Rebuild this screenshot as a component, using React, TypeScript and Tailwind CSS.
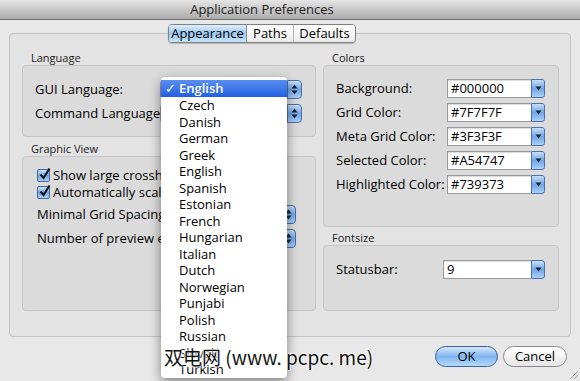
import React from "react";

const font = "font-['Open_Sans','DejaVu_Sans',sans-serif]";

const languages = [
  "Czech",
  "Danish",
  "German",
  "Greek",
  "English",
  "Spanish",
  "Estonian",
  "French",
  "Hungarian",
  "Italian",
  "Dutch",
  "Norwegian",
  "Punjabi",
  "Polish",
  "Russian",
  "Slovak",
  "Turkish",
];

const colors = [
  { label: "Background:", value: "#000000" },
  { label: "Grid Color:", value: "#7F7F7F" },
  { label: "Meta Grid Color:", value: "#3F3F3F" },
  { label: "Selected Color:", value: "#A54747" },
  { label: "Highlighted Color:", value: "#739373" },
];

function UpDownCap() {
  return (
    <div className="flex h-full w-[15px] items-center justify-center rounded-r-[4px] border border-[#4d6fae] bg-gradient-to-b from-[#c9e0f8] via-[#6fa6e6] to-[#a9d1fb]">
      <svg width="7" height="11" viewBox="0 0 7 11">
        <path d="M3.5 0.5 L6.5 4.5 L0.5 4.5 Z" fill="#1b2535" />
        <path d="M0.5 6.5 L6.5 6.5 L3.5 10.5 Z" fill="#1b2535" />
      </svg>
    </div>
  );
}

function DownCap() {
  return (
    <div className="flex h-full w-[14px] items-center justify-center rounded-r-[3px] border border-[#4d6fae] bg-gradient-to-b from-[#c9e0f8] via-[#6fa6e6] to-[#a9d1fb]">
      <svg width="7" height="5" viewBox="0 0 7 5">
        <path d="M0.5 0.5 L6.5 0.5 L3.5 4.5 Z" fill="#1b2535" />
      </svg>
    </div>
  );
}

function Combo({ value, width }: { value: string; width: string }) {
  return (
    <div className={`flex h-[19px] ${width}`}>
      <div className="flex flex-1 items-center border border-r-0 border-[#9a9a9a] bg-white pl-[3px] text-[13px] leading-none shadow-[inset_0_1px_1px_rgba(0,0,0,0.15)]">
        {value}
      </div>
      <DownCap />
    </div>
  );
}

function Popup({ width }: { width: string }) {
  return (
    <div className={`flex h-[19px] shrink-0 ${width}`}>
      <div className="flex-1 rounded-l-[4px] border border-r-0 border-[#9a9a9a] bg-gradient-to-b from-white to-[#eeeeee]" />
      <UpDownCap />
    </div>
  );
}

function Checkbox() {
  return (
    <div className="relative h-[13px] w-[13px] shrink-0 rounded-[2px] border border-[#4a6599] bg-gradient-to-b from-[#cfe3fa] via-[#6ea4e4] to-[#a8d0fa]">
      <svg
        className="absolute left-[0px] top-[-3px]"
        width="13"
        height="14"
        viewBox="0 0 13 14"
      >
        <path
          d="M2.5 7.5 L5.5 11 L11.5 1.5"
          stroke="#111"
          strokeWidth="2"
          fill="none"
        />
      </svg>
    </div>
  );
}

function SectionLabel({ children }: { children: React.ReactNode }) {
  return (
    <div className="h-[15px] pl-[9px] text-[11px] leading-[15px] text-[#1a1a1a]">
      {children}
    </div>
  );
}

export default function App() {
  return (
    <div
      className={`relative h-[381px] w-[580px] overflow-hidden bg-[#e8e8e8] text-[13px] text-black ${font}`}
    >
      <div className="flex h-[20px] items-center justify-center border-b border-[#6e6e6e] bg-gradient-to-b from-[#e6e6e6] to-[#ababab] pr-[56px] text-[13px] text-[#1e1e1e]">
        Application Preferences
      </div>

      <div className="px-[9px] pt-[4px]">
        <div className="relative z-10 flex pl-[159px]">
          <div className="flex h-[19px] overflow-hidden rounded-[4px] border border-[#7f7f7f] text-[13px] leading-none shadow-[0_1px_1px_rgba(0,0,0,0.2)]">
            <div className="flex w-[78px] items-center justify-center border-r border-[#8a8a8a] bg-gradient-to-b from-[#e0eefb] via-[#9cc8f2] to-[#c5e4fb]">
              Appearance
            </div>
            <div className="flex w-[47px] items-center justify-center border-r border-[#b5b5b5] bg-gradient-to-b from-white to-[#ececec]">
              Paths
            </div>
            <div className="flex w-[61px] items-center justify-center bg-gradient-to-b from-white to-[#ececec]">
              Defaults
            </div>
          </div>
        </div>

        <div className="-mt-[10px] h-[304px] rounded-[4px] border border-[#c4c4c4] bg-[#e3e3e3] pt-[16px]">
          <div className="flex gap-[7px] pl-[12px]">
            <div className="w-[294px]">
              <SectionLabel>Language</SectionLabel>
              <div className="flex h-[72px] flex-col gap-[5px] rounded-[4px] border border-[#c6c6c6] bg-[#dbdbdb] pt-[14px]">
                <div className="flex h-[19px] items-center pl-[12px]">
                  <div className="w-[125px] shrink-0 whitespace-nowrap">GUI Language:</div>
                  <Popup width="w-[142px]" />
                </div>
                <div className="flex h-[19px] items-center pl-[12px]">
                  <div className="w-[125px] shrink-0 whitespace-nowrap">Command Language:</div>
                  <Popup width="w-[142px]" />
                </div>
              </div>

              <div className="mt-[4px]">
                <SectionLabel>Graphic View</SectionLabel>
              </div>
              <div className="flex h-[155px] flex-col rounded-[4px] border border-[#c6c6c6] bg-[#dbdbdb] pt-[12px]">
                <div className="flex h-[13px] items-center gap-[3px] pl-[14px] whitespace-nowrap">
                  <Checkbox />
                  <span>Show large crosshairs</span>
                </div>
                <div className="mt-[4px] flex h-[13px] items-center gap-[3px] pl-[14px] whitespace-nowrap">
                  <Checkbox />
                  <span>Automatically scale grid</span>
                </div>
                <div className="mt-[6px] flex h-[19px] items-center justify-between pl-[14px] pr-[19px] whitespace-nowrap">
                  <span>Minimal Grid Spacing (px):</span>
                  <Popup width="w-[60px]" />
                </div>
                <div className="mt-[5px] flex h-[19px] items-center justify-between pl-[14px] pr-[19px] whitespace-nowrap">
                  <span>Number of preview entities:</span>
                  <Popup width="w-[60px]" />
                </div>
              </div>
            </div>

            <div className="w-[236px]">
              <SectionLabel>Colors</SectionLabel>
              <div className="flex h-[162px] flex-col gap-[5px] rounded-[4px] border border-[#c6c6c6] bg-[#dbdbdb] pt-[13px]">
                {colors.map((c) => (
                  <div key={c.label} className="flex h-[19px] items-center pl-[12px]">
                    <div className="w-[111px] whitespace-nowrap">{c.label}</div>
                    <Combo value={c.value} width="w-[98px]" />
                  </div>
                ))}
              </div>

              <div className="mt-[3px]">
                <SectionLabel>Fontsize</SectionLabel>
              </div>
              <div className="h-[66px] rounded-[4px] border border-[#c6c6c6] bg-[#dbdbdb] pt-[14px]">
                <div className="flex h-[19px] items-center pl-[12px]">
                  <div className="w-[107px]">Statusbar:</div>
                  <Combo value="9" width="w-[102px]" />
                </div>
              </div>
            </div>
          </div>
        </div>

        <div className="mt-[9px] flex justify-end gap-[5px] pr-[4px]">
          <button className="flex h-[21px] w-[63px] items-center justify-center rounded-full border border-[#3d5f9a] bg-gradient-to-b from-[#d6e9fb] via-[#7eb4ee] to-[#b6dafb] text-[13px] leading-none">
            OK
          </button>
          <button className="flex h-[21px] w-[64px] items-center justify-center rounded-full border border-[#8a8a8a] bg-gradient-to-b from-white to-[#e6e6e6] text-[13px] leading-none">
            Cancel
          </button>
        </div>
      </div>

      <svg className="absolute bottom-[1px] right-[1px]" width="11" height="11" viewBox="0 0 11 11">
        <path d="M10 2 L2 10 M10 6 L6 10" stroke="#9a9a9a" strokeWidth="1" />
      </svg>

      <div className="absolute left-[161px] top-[77px] w-[126px] rounded-[4px] bg-white pt-[3px] shadow-[0_4px_12px_rgba(0,0,0,0.45)]">
        <div className="flex h-[17px] items-center bg-gradient-to-b from-[#5a8ef0] to-[#1f5fe0] text-white">
          <span className="w-[18px] pl-[4px] text-[13px]">✓</span>
          <span className="font-semibold">English</span>
        </div>
        {languages.map((l, i) => (
          <div key={i} className="h-[16.5px] pl-[18px] leading-[16.5px]">
            {l}
          </div>
        ))}
      </div>

      <div className="absolute left-[164px] top-[344px] font-['Noto_Sans_CJK_SC','DejaVu_Sans',sans-serif] text-[19px] leading-[26px] text-[#111] [text-shadow:0_0_2px_#fff,0_0_2px_#fff,0_0_3px_#fff]">
        双电网 (www. pcpc. me)
      </div>
    </div>
  );
}
